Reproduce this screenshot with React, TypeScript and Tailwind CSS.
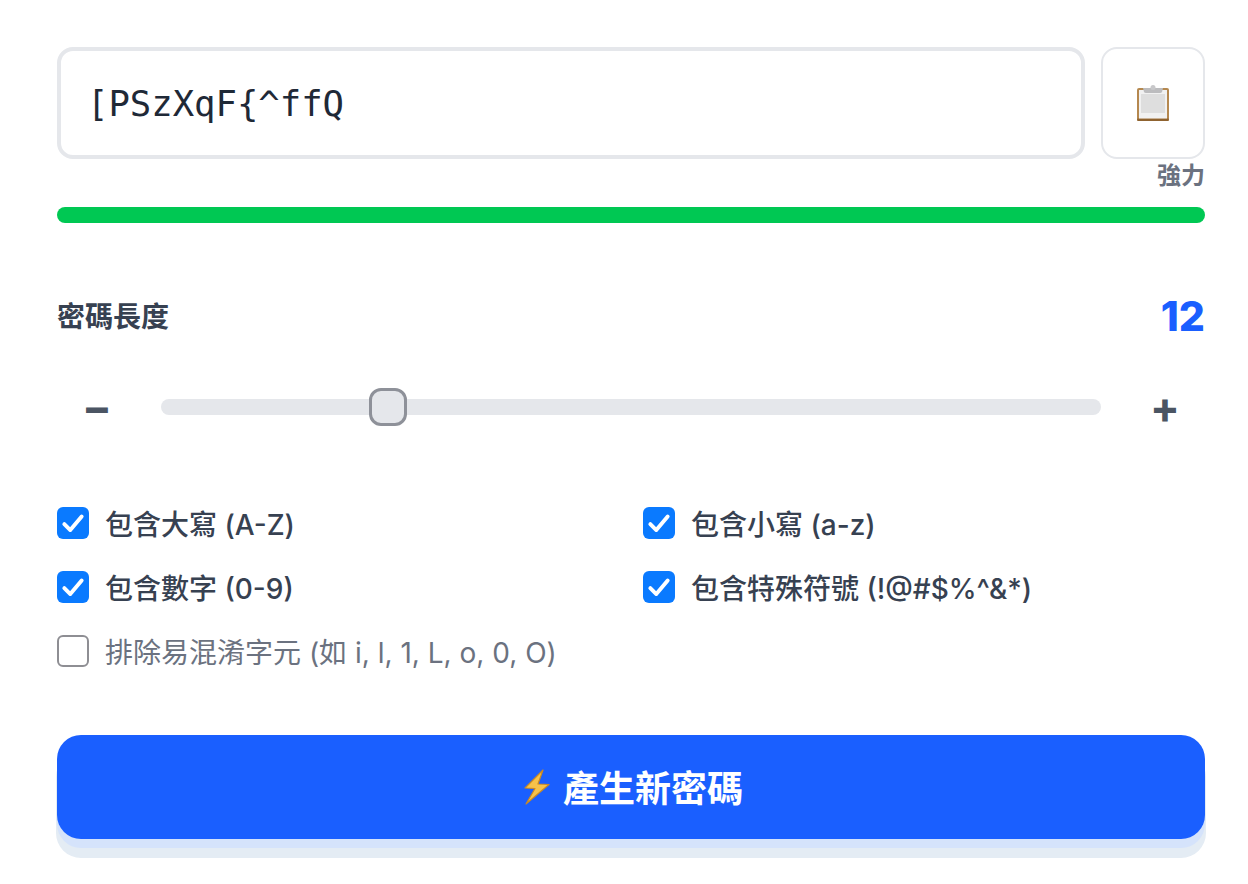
import React from "react";

const SANS = "font-['Inter','Noto_Sans_CJK_TC',sans-serif]";

function Clipboard() {
  return (
    <svg width="34" height="36" viewBox="0 0 34 36">
      <rect x="1" y="3" width="32" height="33" rx="2" fill="#b5884f" />
      <rect x="1" y="33.5" width="32" height="2.5" rx="1.2" fill="#8f6330" />
      <rect x="3" y="5" width="28" height="28.5" fill="#f1f1f1" />
      <rect x="5" y="9" width="24" height="19" fill="#dedede" />
      <path d="M7 3 H27 L26 7 Q25.5 8 24 8 H10 Q8.5 8 8 7 Z" fill="#bcbcbe" />
      <circle cx="17" cy="2.5" r="2.5" fill="#c8c8ca" />
    </svg>
  );
}

function Bolt() {
  return (
    <svg width="28" height="36" viewBox="0 0 28 36">
      <path d="M20 1 L2 19 L12 19.5 L3 35 L26 15.5 L15 15 Z" fill="#f6c24a" stroke="#c98a24" strokeWidth="1.2" strokeLinejoin="round" />
    </svg>
  );
}

function Check({ label, on = true }: { label: string; on?: boolean }) {
  return (
    <label className={`flex items-center gap-4 h-8 ${on ? "text-[#374151] font-medium" : "text-[#6b7280] font-normal"}`}>
      {on ? (
        <span className="w-8 h-8 rounded-md bg-[#0a7aff] flex items-center justify-center shrink-0">
          <svg width="26" height="26" viewBox="0 0 24 24" fill="none" stroke="#fff" strokeWidth="3.6" strokeLinecap="round" strokeLinejoin="round">
            <path d="M4 13 L9.5 18.5 L20 6" />
          </svg>
        </span>
      ) : (
        <span className="w-8 h-8 rounded-md border-2 border-[#8e8e93] bg-white shrink-0" />
      )}
      <span className="pt-1 text-[28px] leading-8 whitespace-nowrap">{label}</span>
    </label>
  );
}

export default function App() {
  return (
    <div className={`w-[1248px] h-[884px] bg-white pl-[57px] pr-[43px] pt-[47px] overflow-hidden ${SANS}`}>
      <div className="flex gap-4 h-[112px]">
        <input
          readOnly
          value="[PSzXqF{^ffQ"
          className="flex-1 min-w-0 h-full rounded-2xl border-4 border-[#e5e7eb] bg-white pl-[26px] text-[35.6px] text-[#1f2937] font-['DejaVu_Sans_Mono',monospace] outline-none"
        />
        <button className="w-[104px] h-full rounded-2xl border-2 border-[#e5e7eb] bg-white flex items-center justify-center">
          <Clipboard />
        </button>
      </div>

      <div className="mt-[2px] h-[30px] text-right text-[24px] leading-[30px] font-semibold text-[#6b7280]">強力</div>
      <div className="mt-[16px] h-4 rounded-full bg-[#00c853]" />

      <div className="mt-[70px] flex items-center justify-between h-12">
        <span className="text-[28px] font-semibold text-[#374151]">密碼長度</span>
        <span className="text-[41px] font-extrabold text-[#1a5fff]">12</span>
      </div>

      <div className="mt-[46px] flex items-center gap-6 h-10">
        <button className="w-20 text-[44px] leading-10 font-bold text-[#4b5563]">−</button>
        <div className="relative flex-1 h-4 rounded-lg bg-[#e5e7eb]">
          <div className="absolute left-[208px] top-[-11px] w-[38px] h-[38px] rounded-xl border-[3px] border-[#8e9199] bg-[#e5e7eb]" />
        </div>
        <button className="w-20 text-[44px] leading-10 font-bold text-[#4b5563]">+</button>
      </div>

      <div className="mt-[80px] grid grid-cols-2 gap-x-6 gap-y-8">
        <Check label="包含大寫 (A-Z)" />
        <Check label="包含小寫 (a-z)" />
        <Check label="包含數字 (0-9)" />
        <Check label="包含特殊符號 (!@#$%^&*)" />
        <div className="col-span-2">
          <Check label="排除易混淆字元 (如 i, l, 1, L, o, 0, O)" on={false} />
        </div>
      </div>

      <button className="mt-[68px] w-full h-[104px] pl-1 rounded-3xl bg-[#1a5fff] flex items-center justify-center gap-3 text-white text-[36px] font-bold shadow-[0_9px_0_#d5e3fb,0_18px_0_1px_#e4ecf4]">
        <Bolt />
        <span className="pt-1">產生新密碼</span>
      </button>
    </div>
  );
}
